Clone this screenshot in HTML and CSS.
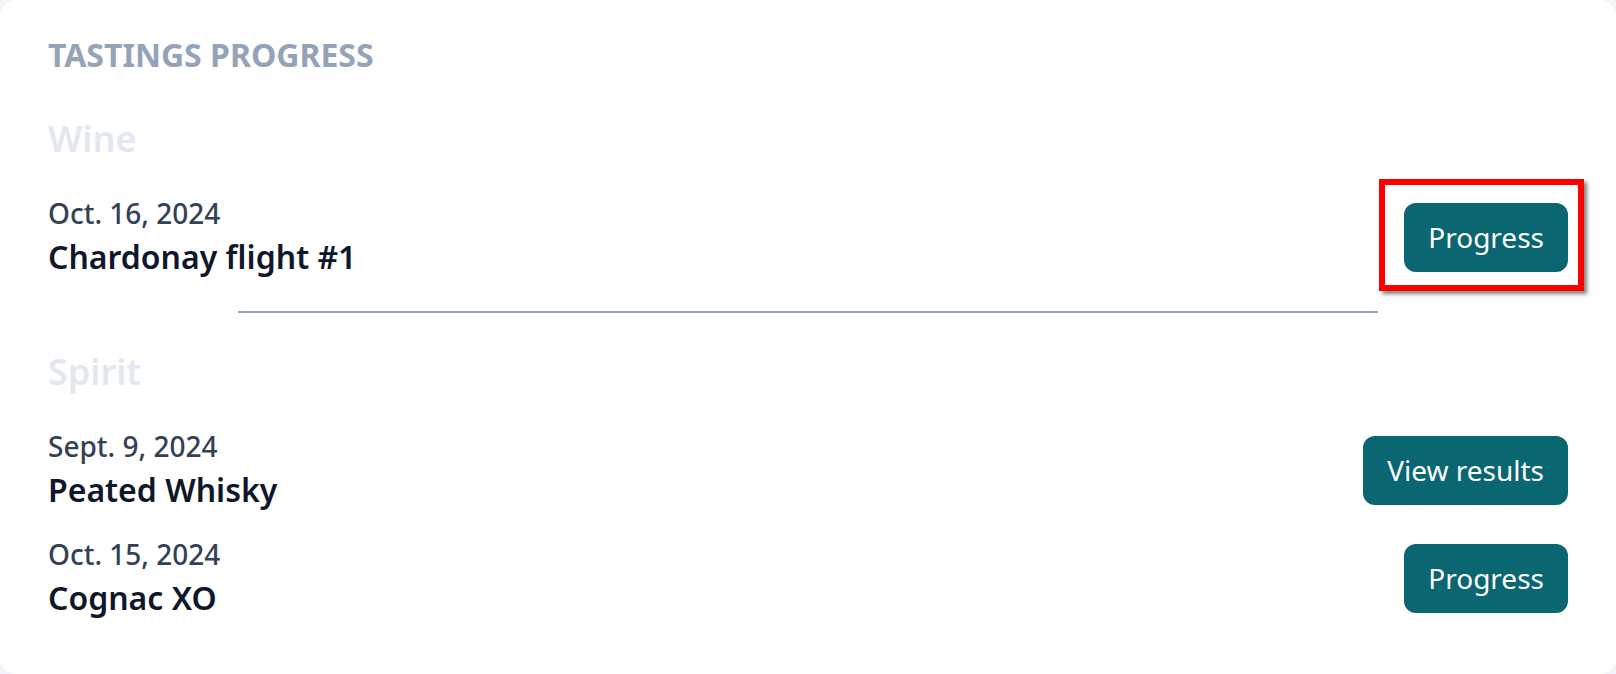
FILE: index.html
```html
<!DOCTYPE html>
<html lang="en">
<head>
  <meta charset="UTF-8">
  <meta name="viewport" content="width=device-width, initial-scale=1">
  <title>Tastings Progress</title>
  <link rel="stylesheet" href="styles.css">
</head>

<body>

<div class="card">
  <h2 class="card-title">TASTINGS PROGRESS</h2>

  <!-- Wine -->
  <section class="group">
    <h3 class="group-title">Wine</h3>
    <ul class="tastings">
      <li class="tasting">
        <div class="tasting-info">
          <div class="tasting-date">Oct. 16, 2024</div>
          <div class="tasting-name">Chardonay flight #1</div>
        </div>
        <div class="highlight">
          <button class="btn">Progress</button>
        </div>
      </li>
    </ul>
  </section>

  <hr class="divider">

  <!-- Spirit -->
  <section class="group">
    <h3 class="group-title">Spirit</h3>
    <ul class="tastings">
      <li class="tasting">
        <div class="tasting-info">
          <div class="tasting-date">Sept. 9, 2024</div>
          <div class="tasting-name">Peated Whisky</div>
        </div>
        <button class="btn">View results</button>
      </li>
      <li class="tasting">
        <div class="tasting-info">
          <div class="tasting-date">Oct. 15, 2024</div>
          <div class="tasting-name">Cognac XO</div>
        </div>
        <button class="btn">Progress</button>
      </li>
    </ul>
  </section>
</div>

</body>
</html>
```

FILE: styles.css
```css
* {
  box-sizing: border-box;
  padding: 0;
  margin: 0;
}

body {
  font-family: "Noto Sans", "Open Sans", sans-serif;
  background: #f1f5f9;
}

.card {
  background: #fff;
  min-height: 674px;
  padding: 35px 48px 48px;
  border-radius: 16px;
}

.card-title {
  font-size: 32px;
  line-height: 40px;
  font-weight: 700;
  color: #94a3b8;
  margin-bottom: 36px;
}

.group-title {
  font-size: 36px;
  line-height: 56px;
  font-weight: 600;
  color: #e2e8f0;
  margin-bottom: 26px;
}

.tastings {
  list-style: none;
  display: flex;
  flex-direction: column;
  gap: 20px;
}

.tasting {
  display: flex;
  justify-content: space-between;
  align-items: center;
}

.tasting-date {
  font-size: 28px;
  line-height: 40px;
  font-weight: 500;
  color: #334155;
}

.tasting-name {
  font-size: 32px;
  line-height: 48px;
  font-weight: 600;
  color: #0f172a;
}

.btn {
  background: #0a6670;
  color: #fff;
  border: none;
  border-radius: 12px;
  padding: 0 24px;
  height: 69px;
  font-family: inherit;
  font-size: 28px;
  cursor: pointer;
}

.btn:hover {
  background: #08555d;
}

.divider {
  width: 75%;
  margin: 30px auto 31px;
  border: none;
  border-top: 2px solid #94a3b8;
}

/* annotation box round the first button */
.highlight {
  position: relative;
}

.highlight::after {
  content: "";
  position: absolute;
  left: -25px;
  top: -24px;
  right: -16px;
  bottom: -19px;
  border: 6px solid #ff0000;
  box-shadow: 3px 3px 4px rgba(0, 0, 0, 0.5);
  pointer-events: none;
}
```
